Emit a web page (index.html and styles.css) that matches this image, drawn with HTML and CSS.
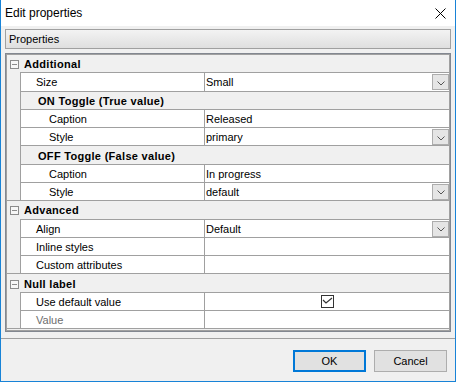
FILE: index.html
```html
<!DOCTYPE html>
<html lang="en">
	<head>
		<link rel="stylesheet" href="styles.css">
		<meta charset="utf-8">
	</head>

	<body>
		<div class="window">
			<div class="titlebar">
				<span class="title">Edit properties</span>
				<svg class="close" width="11" height="11" viewBox="0 0 11 11"><path d="M0.5 0.5 L10.5 10.5 M10.5 0.5 L0.5 10.5" stroke="#000" stroke-width="1"/></svg>
			</div>

			<div class="toolbar">Properties</div>

			<div class="grid">
				<div class="grid-inner">
					<div class="row category">
						<span class="gutter"><span class="toggle"></span></span>
						<span class="body">Additional</span>
					</div>
					<div class="row">
						<span class="gutter"></span>
						<span class="name">Size</span>
						<span class="value">Small<span class="drop"><svg width="8" height="5" viewBox="0 0 8 5"><polyline points="0.5,0.5 4,4 7.5,0.5" fill="none" stroke="#555"/></svg></span></span>
					</div>
					<div class="row sub">
						<span class="gutter"></span>
						<span class="body">ON Toggle (True value)</span>
					</div>
					<div class="row">
						<span class="gutter"></span>
						<span class="name indent">Caption</span>
						<span class="value">Released</span>
					</div>
					<div class="row">
						<span class="gutter"></span>
						<span class="name indent">Style</span>
						<span class="value">primary<span class="drop"><svg width="8" height="5" viewBox="0 0 8 5"><polyline points="0.5,0.5 4,4 7.5,0.5" fill="none" stroke="#555"/></svg></span></span>
					</div>
					<div class="row sub">
						<span class="gutter"></span>
						<span class="body">OFF Toggle (False value)</span>
					</div>
					<div class="row">
						<span class="gutter"></span>
						<span class="name indent">Caption</span>
						<span class="value">In progress</span>
					</div>
					<div class="row last">
						<span class="gutter"></span>
						<span class="name indent">Style</span>
						<span class="value">default<span class="drop"><svg width="8" height="5" viewBox="0 0 8 5"><polyline points="0.5,0.5 4,4 7.5,0.5" fill="none" stroke="#555"/></svg></span></span>
					</div>

					<div class="row category">
						<span class="gutter"><span class="toggle"></span></span>
						<span class="body">Advanced</span>
					</div>
					<div class="row">
						<span class="gutter"></span>
						<span class="name">Align</span>
						<span class="value">Default<span class="drop"><svg width="8" height="5" viewBox="0 0 8 5"><polyline points="0.5,0.5 4,4 7.5,0.5" fill="none" stroke="#555"/></svg></span></span>
					</div>
					<div class="row">
						<span class="gutter"></span>
						<span class="name">Inline styles</span>
						<span class="value"></span>
					</div>
					<div class="row last">
						<span class="gutter"></span>
						<span class="name">Custom attributes</span>
						<span class="value"></span>
					</div>

					<div class="row category">
						<span class="gutter"><span class="toggle"></span></span>
						<span class="body">Null label</span>
					</div>
					<div class="row">
						<span class="gutter"></span>
						<span class="name">Use default value</span>
						<span class="value center"><svg width="13" height="13" viewBox="0 0 13 13"><rect x="0.5" y="0.5" width="12" height="12" fill="#fff" stroke="#333"/><polyline points="2,5 5,8 11,3" fill="none" stroke="#333" stroke-width="1.2"/></svg></span>
					</div>
					<div class="row last">
						<span class="gutter"></span>
						<span class="name disabled">Value</span>
						<span class="value"></span>
					</div>
				</div>
			</div>

			<div class="footer">
				<button class="btn default">OK</button>
				<button class="btn">Cancel</button>
			</div>
		</div>
	</body>
</html>
```

FILE: styles.css
```css
body {
	margin: 0;
	font-family: "Liberation Sans", Arial, sans-serif;
	font-size: 11px;
	color: #000;
}

.window {
	width: 456px;
	height: 382px;
	box-sizing: border-box;
	border: 1px solid #1883d7;
	border-top: none;
	background-color: #f0f0f0;
	display: flex;
	flex-direction: column;
}

.titlebar {
	height: 26px;
	flex: none;
	background-color: #fff;
	display: flex;
	align-items: center;
}

.title {
	font-size: 12px;
	line-height: 26px;
	padding-left: 4px;
	align-self: flex-start;
}

.close {
	margin-left: auto;
	margin-right: 9px;
}

.toolbar {
	margin: 3px 4px 0;
	height: 20px;
	box-sizing: border-box;
	border: 1px solid #a0a0a0;
	background: linear-gradient(#f3f3f3, #dfdfdf);
	padding-left: 3px;
	line-height: 19px;
	flex: none;
}

.grid {
	margin: 4px 4px 0;
	height: 279px;
	box-sizing: border-box;
	border: 1px solid #828790;
	flex: none;
}

.grid-inner {
	height: 100%;
	box-sizing: border-box;
	border: 1px solid #a0a0a0;
	background-color: #f0f0f0;
}

.row {
	display: flex;
	height: 18.29px;
}

.row > span {
	box-sizing: border-box;
	display: flex;
	align-items: center;
	padding-top: 1px;
}

.gutter {
	width: 13px;
	flex: none;
}

.row.last .gutter {
	border-bottom: 1px solid #a0a0a0;
}

.toggle {
	width: 9px;
	height: 9px;
	box-sizing: border-box;
	margin-left: 3px;
	border: 1px solid #8c8c8c;
	background: linear-gradient(#8c8c8c, #8c8c8c) no-repeat center / 5px 1px, #f7f7f7;
}

.body {
	flex: 1;
	font-weight: bold;
	letter-spacing: 0.3px;
	border-bottom: 1px solid #a0a0a0;
}

.category .body {
	padding-left: 4px;
}

.sub .body {
	border-left: 1px solid #a0a0a0;
	padding-left: 17px;
}

.name {
	width: 185px;
	flex: none;
	background-color: #fff;
	border-left: 1px solid #a0a0a0;
	border-right: 1px solid #a0a0a0;
	border-bottom: 1px solid #a0a0a0;
	padding-left: 15px;
}

.name.indent {
	padding-left: 28px;
}

.name.disabled {
	color: #6d6d6d;
}

.value {
	flex: 1;
	background-color: #fff;
	border-bottom: 1px solid #a0a0a0;
	padding-left: 1px;
}

.row > .value.center {
	justify-content: center;
	padding: 0;
}

.drop {
	margin-left: auto;
	align-self: flex-start;
	margin-top: 0;
	width: 17px;
	height: 16px;
	box-sizing: border-box;
	border: 1px solid #adadad;
	background-color: #e5e5e5;
	display: flex;
	align-items: center;
	justify-content: center;
}

.drop svg {
	margin-top: 2px;
}

.footer {
	margin-top: 6px;
	border-top: 1px solid #a0a0a0;
	padding: 11px 8px 0 0;
	display: flex;
	justify-content: flex-end;
	gap: 8px;
}

.btn {
	width: 73px;
	height: 22px;
	box-sizing: border-box;
	border: 1px solid #adadad;
	background-color: #e1e1e1;
	font-family: "Liberation Sans", Arial, sans-serif;
	font-size: 11px;
	color: #000;
	padding: 0;
}

.btn.default {
	border: 2px solid #0078d7;
}
```
